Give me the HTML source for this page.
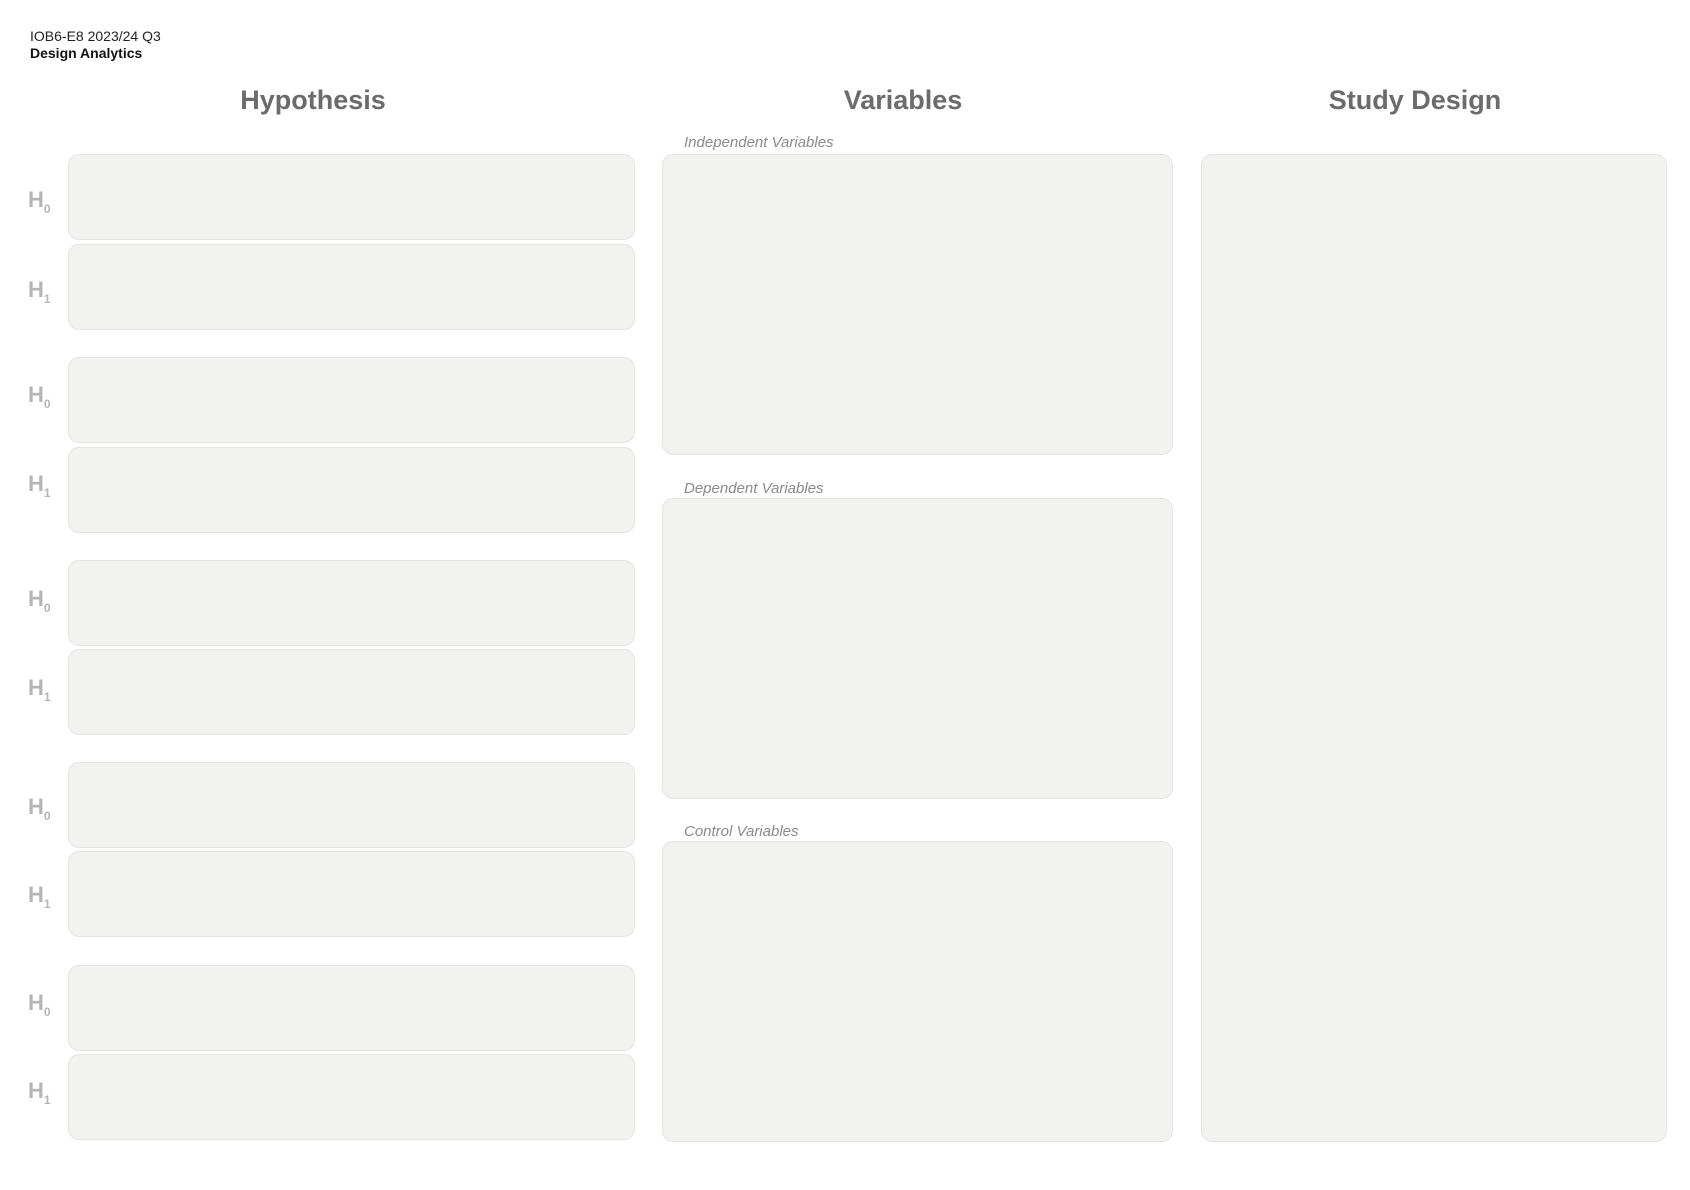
<!DOCTYPE html>
<html><head><meta charset="utf-8"><style>
*{margin:0;padding:0;box-sizing:border-box}
body{width:1690px;height:1190px;background:#fff;position:relative;font-family:"Liberation Sans",sans-serif;overflow:hidden}
.a{position:absolute}
.box{position:absolute;background:#f2f2f1;border:1px solid #e4e4e3;border-radius:11px}
.h{position:absolute;font-size:27px;font-weight:bold;color:#6b6b6b;transform:translateX(-50%);white-space:nowrap}
.lbl{position:absolute;font-size:22px;font-weight:bold;color:#b5b5b5;left:28px}
.lbl sub{font-size:12px;vertical-align:-6px;font-weight:bold}
.it{position:absolute;left:684px;font-style:italic;font-size:15px;color:#8a8a8a}
</style></head><body>
<div class="a" style="left:30px;top:28px;font-size:14px;color:#222">IOB6-E8 2023/24 Q3</div>
<div class="a" style="left:30px;top:45px;font-size:14px;font-weight:bold;color:#111">Design Analytics</div>
<div class="h" style="left:313px;top:85px">Hypothesis</div>
<div class="h" style="left:903px;top:85px">Variables</div>
<div class="h" style="left:1415px;top:85px">Study Design</div>

<div class="box" style="left:68px;top:154px;width:567px;height:86px"></div>
<div class="box" style="left:68px;top:244px;width:567px;height:86px"></div>
<div class="box" style="left:68px;top:357px;width:567px;height:86px"></div>
<div class="box" style="left:68px;top:447px;width:567px;height:86px"></div>
<div class="box" style="left:68px;top:560px;width:567px;height:86px"></div>
<div class="box" style="left:68px;top:649px;width:567px;height:86px"></div>
<div class="box" style="left:68px;top:762px;width:567px;height:86px"></div>
<div class="box" style="left:68px;top:851px;width:567px;height:86px"></div>
<div class="box" style="left:68px;top:965px;width:567px;height:86px"></div>
<div class="box" style="left:68px;top:1054px;width:567px;height:86px"></div>

<div class="lbl" style="top:187px">H<sub>0</sub></div>
<div class="lbl" style="top:277px">H<sub>1</sub></div>
<div class="lbl" style="top:382px">H<sub>0</sub></div>
<div class="lbl" style="top:471px">H<sub>1</sub></div>
<div class="lbl" style="top:586px">H<sub>0</sub></div>
<div class="lbl" style="top:675px">H<sub>1</sub></div>
<div class="lbl" style="top:794px">H<sub>0</sub></div>
<div class="lbl" style="top:882px">H<sub>1</sub></div>
<div class="lbl" style="top:990px">H<sub>0</sub></div>
<div class="lbl" style="top:1078px">H<sub>1</sub></div>

<div class="it" style="top:134px">Independent Variables</div>
<div class="box" style="left:662px;top:154px;width:511px;height:301px"></div>
<div class="it" style="top:480px">Dependent Variables</div>
<div class="box" style="left:662px;top:498px;width:511px;height:301px"></div>
<div class="it" style="top:823px">Control Variables</div>
<div class="box" style="left:662px;top:841px;width:511px;height:301px"></div>

<div class="box" style="left:1201px;top:154px;width:466px;height:988px"></div>
</body></html>
